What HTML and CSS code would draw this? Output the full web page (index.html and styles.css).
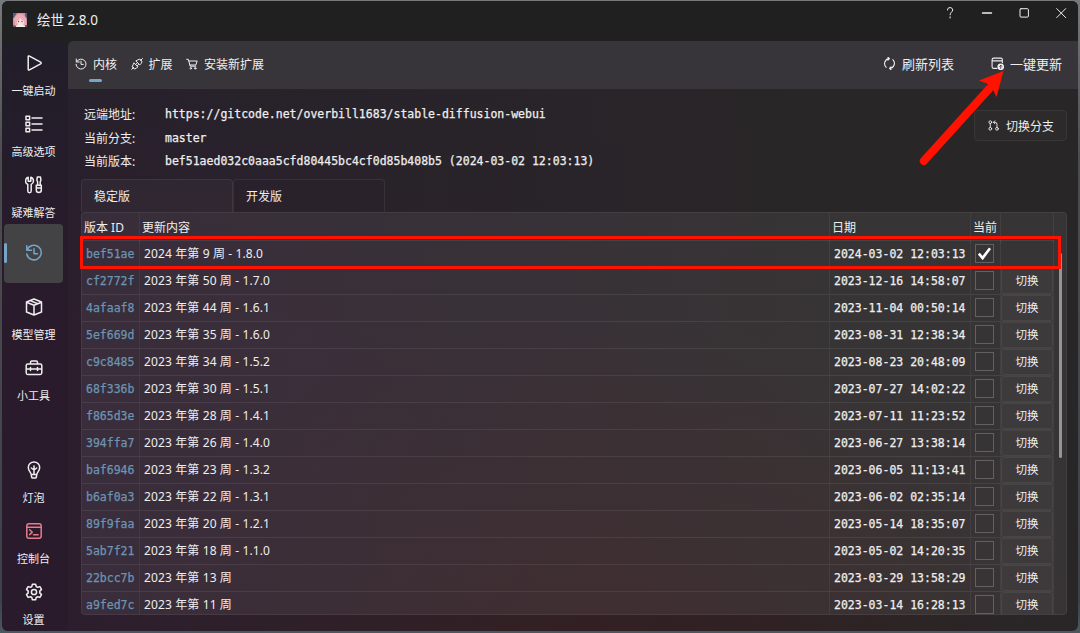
FILE: index.html
```html
<!DOCTYPE html>
<html lang="zh-CN">

<head>
  <meta charset="UTF-8">
  <meta name="viewport" content="width=device-width, initial-scale=1.0">
  <title>绘世 2.8.0</title>
  <link rel="stylesheet" href="styles.css">
</head>

<body>
  <div class="window">
    <header class="titlebar">
      <svg class="logo" viewBox="0 0 14 14">
        <rect width="14" height="14" rx="2" fill="#d88f9e" />
        <path d="M0 2 0 0H4L2 3 1 5H0zM12 0h2v6l-2-3z" fill="#46658c" />
        <path d="M1 6Q3 1 7 1t6 5v6H2z" fill="#efa9b2" />
        <path d="M4 8l2-1 1-2 2 2 2 1v2l-2 2H6l-2-2z" fill="#f7ded8" />
        <circle cx="5.5" cy="8.5" r=".7" fill="#7b4355" />
        <circle cx="9" cy="8.5" r=".7" fill="#7b4355" />
        <path d="M3 13l3-2 1 1 2-1 3 2v1H3z" fill="#f0ece8" />
        <path d="M0 12l3 1v1H0zM12 12h2v2h-2z" fill="#6f536d" />
      </svg>
      <span class="title">绘世 2.8.0</span>
      <div class="win-btns">
        <svg class="help" viewBox="0 0 12 12"><path d="M3.5 3C3.5 1.3 4.6.6 6 .6S8.7 1.5 8.7 3C8.7 5 6.1 5.1 6.1 7.8M6.1 9.8v1.2" /></svg>
        <svg viewBox="0 0 12 12"><path d="M1.5 6h9" stroke-width="1.4" /></svg>
        <svg viewBox="0 0 12 12"><rect x="2" y="1.7" width="8.4" height="8.4" rx="1" /></svg>
        <svg viewBox="0 0 12 12"><path d="M1.7 1.6l9 9M10.7 1.6l-9 9" /></svg>
      </div>
    </header>

    <div class="body">
      <nav class="sidebar">
        <a class="nav-item">
          <svg viewBox="0 0 18 18"><path d="M3.2 2.9v12.2q0 1.4 1.3.8L15.6 9.8q1.2-.8 0-1.6L4.5 2.1q-1.3-.6-1.3.8z" /></svg>
          <span>一键启动</span>
        </a>
        <a class="nav-item">
          <svg viewBox="0 0 18 18"><path d="M1 1.2h3.6v3.6H1zM1 7.2h3.6v3.6H1zM1 13.2h3.6v3.6H1zM7 3h10M7 9h10M7 15h10" /></svg>
          <span>高级选项</span>
        </a>
        <a class="nav-item">
          <svg viewBox="0 0 18 18"><path d="M3.2 1.3v4h2.6v-4a3.8 3.8 0 0 1 .4 7.1V15a1.7 1.7 0 0 1-3.4 0V8.4A3.8 3.8 0 0 1 3.2 1.3zM12.3 1h3.2l.4 3.2-.7 1.6v3.4h-2.6V5.8l-.7-1.6zM11.3 9.2h5V14a2.5 2.5 0 0 1-5 0zM11.3 12h5" /></svg>
          <span>疑难解答</span>
        </a>
        <a class="nav-item active">
          <svg viewBox="0 0 18 18"><path d="M1.8 1.7v4.6h4.6M2.1 6A7.3 7.3 0 1 1 1.8 10M9 4.8v4.9h3.5" /></svg>
        </a>
        <a class="nav-item">
          <svg viewBox="0 0 18 18"><path d="M9 1l7.5 3v10L9 17l-7.5-3V4zM1.5 4.3L9 7.3l7.5-3M9 7.3V17M5.3 2.6l7.4 3.1" /></svg>
          <span>模型管理</span>
        </a>
        <a class="nav-item">
          <svg viewBox="0 0 18 18"><path d="M5.5 5V3.5q0-1.4 1.4-1.4h4.2q1.4 0 1.4 1.4V5M2.8 5h12.4q1.6 0 1.6 1.6v7.2q0 1.6-1.6 1.6H2.8q-1.6 0-1.6-1.6V6.6Q1.2 5 2.8 5zM1.2 10h15.6M5.5 8.4v3.2M12.5 8.4v3.2" /></svg>
          <span>小工具</span>
        </a>
        <div class="spacer"></div>
        <a class="nav-item">
          <svg viewBox="0 0 18 18"><path d="M6.2 13.3C6 11.5 3.3 10 3.3 6.6A5.7 5.7 0 0 1 14.7 6.6c0 3.4-2.7 4.9-2.9 6.7l-.4 2.7q-.2 1-1.2 1H7.8q-1 0-1.2-1zM6.2 13.5h5.6M9 13V5M6.3 7l2.7 2 2.7-2" /></svg>
          <span>灯泡</span>
        </a>
        <a class="nav-item console">
          <svg viewBox="0 0 18 18"><path d="M4 1.8h10q2.2 0 2.2 2.2v10q0 2.2-2.2 2.2H4q-2.2 0-2.2-2.2V4Q1.8 1.8 4 1.8zM1.8 5.2h14.4M4.7 7.8l2.6 2.4-2.6 2.4M8.5 12.8h4.6" /></svg>
          <span>控制台</span>
        </a>
        <a class="nav-item">
          <svg viewBox="0 0 18 18"><path d="M7.4 1.2h3.2l.6 2.3 1.4.8 2.3-.7 1.6 2.8-1.7 1.7v1.8l1.7 1.7-1.6 2.8-2.3-.7-1.4.8-.6 2.3H7.4l-.6-2.3-1.4-.8-2.3.7-1.6-2.8 1.7-1.7V8.1L1.5 6.4l1.6-2.8 2.3.7 1.4-.8z" /><circle cx="9" cy="9" r="2.6" /></svg>
          <span>设置</span>
        </a>
      </nav>

      <main class="content">
        <div class="toolbar">
          <a class="tool current">
            <svg viewBox="0 0 12 12"><path d="M1.3 1v3h3M1.6 3.7A5 5 0 1 1 1 6.2M6 3.2v3.2h2.3" /></svg>
            <span>内核</span>
          </a>
          <a class="tool">
            <svg viewBox="0 0 12 12"><path d="M.7 11.3l2-2M3.2 5.1l3.7 3.7-1.3 1.3a2.4 2.4 0 0 1-3.5-3.6zM5.1 3.2l3.7 3.7 1.3-1.3A2.5 2.5 0 0 0 6.5 2zM9.5 2.5l2-2M4.6 6.5l1.5-1.5M6 7.9l1.5-1.5" /></svg>
            <span>扩展</span>
          </a>
          <a class="tool">
            <svg viewBox="0 0 12 12"><path d="M.7 1.3h1.6l1.9 6.9h5.6M2.8 3h8.4L9.8 7H4" /><circle cx="4.8" cy="10.3" r=".8" /><circle cx="9.2" cy="10.3" r=".8" /></svg>
            <span>安装新扩展</span>
          </a>
          <a class="tool big refresh">
            <svg viewBox="0 0 12 12"><path d="M5.8 1.5A4.6 4.6 0 0 0 3 9.5M6.2 10.5A4.6 4.6 0 0 0 9 2.5M4.5 .2l1.5 1.3-1.5 1.4M7.5 9.1L6 10.5l1.5 1.3" /></svg>
            <span>刷新列表</span>
          </a>
          <a class="tool big">
            <svg viewBox="0 0 12 12"><path d="M5.5 10.5H2.6Q1 10.5 1 8.9V2.7Q1 1 2.6 1h6.3q1.6 0 1.6 1.6v2.6M1 3.6h9.5" /><circle cx="9" cy="9" r="3.1" fill="#eee" stroke="none" /><path d="M9 10.6V7.8M8 8.6l1-1 1 1" stroke="#38353a" stroke-width=".8" /></svg>
            <span>一键更新</span>
          </a>
        </div>

        <div class="info">
          <dl>
            <dt>远端地址:</dt>
            <dd>https://gitcode.net/overbill1683/stable-diffusion-webui</dd>
            <dt>当前分支:</dt>
            <dd>master</dd>
            <dt>当前版本:</dt>
            <dd>bef51aed032c0aaa5cfd80445bc4cf0d85b408b5 (2024-03-02 12:03:13)</dd>
          </dl>
          <button class="branch-btn">
            <svg viewBox="0 0 12 12"><circle cx="2.5" cy="2.4" r="1.5" /><circle cx="2.5" cy="9.6" r="1.5" /><circle cx="9.8" cy="9.6" r="1.5" /><path d="M2.5 3.9v4.2M9.8 8.1V4.5q0-2-2-2H6M7.5 .9L6 2.5l1.5 1.6" /></svg>
            <span>切换分支</span>
          </button>
        </div>

        <div class="tabs">
          <div class="tab selected">稳定版</div>
          <div class="tab">开发版</div>
        </div>

        <div class="table">
          <div class="row head">
            <div>版本 ID</div>
            <div>更新内容</div>
            <div>日期</div>
            <div>当前</div>
            <div></div>
          </div>
          <div id="rows"></div>
          <div class="scrollbar"></div>
        </div>
      </main>
    </div>
  </div>

  <div class="mark-box"></div>
  <svg class="mark-arrow" viewBox="0 0 90 100">
    <path d="M8.8 91L74 19" stroke="#ff1200" stroke-width="8" stroke-linecap="round" />
    <path d="M88.5 1L81.5 27 77.5 19 72 13.5 64 10.5z" fill="#ff1200" stroke="none" />
  </svg>

  <script>
    const versions = [
      ['bef51ae', '2024 年第 9 周 - 1.8.0', '2024-03-02 12:03:13'],
      ['cf2772f', '2023 年第 50 周 - 1.7.0', '2023-12-16 14:58:07'],
      ['4afaaf8', '2023 年第 44 周 - 1.6.1', '2023-11-04 00:50:14'],
      ['5ef669d', '2023 年第 35 周 - 1.6.0', '2023-08-31 12:38:34'],
      ['c9c8485', '2023 年第 34 周 - 1.5.2', '2023-08-23 20:48:09'],
      ['68f336b', '2023 年第 30 周 - 1.5.1', '2023-07-27 14:02:22'],
      ['f865d3e', '2023 年第 28 周 - 1.4.1', '2023-07-11 11:23:52'],
      ['394ffa7', '2023 年第 26 周 - 1.4.0', '2023-06-27 13:38:14'],
      ['baf6946', '2023 年第 23 周 - 1.3.2', '2023-06-05 11:13:41'],
      ['b6af0a3', '2023 年第 22 周 - 1.3.1', '2023-06-02 02:35:14'],
      ['89f9faa', '2023 年第 20 周 - 1.2.1', '2023-05-14 18:35:07'],
      ['5ab7f21', '2023 年第 18 周 - 1.1.0', '2023-05-02 14:20:35'],
      ['22bcc7b', '2023 年第 13 周', '2023-03-29 13:58:29'],
      ['a9fed7c', '2023 年第 11 周', '2023-03-14 16:28:13']
    ]
    const tick = '<svg viewBox="0 0 18 18"><path d="M3 9.2l4 4.6L14.8 3.5" /></svg>'

    // 第一条为当前版本
    document.querySelector('#rows').innerHTML = versions.map((v, i) => `
      <div class="row">
        <div class="hash">${v[0]}</div>
        <div class="desc">${v[1]}</div>
        <div class="date">${v[2]}</div>
        <div class="now"><span class="check">${i === 0 ? tick : ''}</span></div>
        <div class="op">${i === 0 ? '' : '<button>切换</button>'}</div>
      </div>`).join('')
  </script>
</body>

</html>
```
FILE: styles.css
```css
* {
  margin: 0;
  padding: 0;
  box-sizing: border-box;
}

body {
  width: 1080px;
  height: 633px;
  padding: 1px 2px 2px;
  overflow: hidden;
  background: linear-gradient(#77797a, #4c4c50 25%, #3d4248 95%, #4b5960);
  color: #eee;
  font-family: "Noto Sans", "Noto Sans CJK SC", sans-serif;
  font-size: 12px;
}

svg {
  fill: none;
  stroke: currentColor;
  stroke-linecap: round;
  stroke-linejoin: round;
}

button {
  font: inherit;
  color: inherit;
}

.window {
  display: flex;
  flex-direction: column;
  height: 630px;
  border-radius: 6px;
  overflow: hidden;
  background:
    radial-gradient(ellipse 480px 340px at 600px 650px, rgba(54, 30, 33, 0.75), transparent),
    linear-gradient(90deg, transparent, #292627 75%),
    linear-gradient(#25212c, #2d1d2e 55%, #2d1d2e);
}

.titlebar {
  display: flex;
  align-items: center;
  flex: none;
  height: 40px;
  padding: 0 0 2px 11px;
  background: #202020;
}

.logo {
  width: 14px;
  height: 14px;
  stroke: none;
}

.title {
  margin-left: 10px;
  font-size: 13.5px;
  line-height: 20px;
}

.win-btns {
  display: flex;
  align-self: flex-start;
  gap: 25px;
  margin: 6px 11px 0 auto;
}

.win-btns svg {
  width: 12px;
  height: 12px;
}

.body {
  display: flex;
  flex: 1;
  min-height: 0;
}

.sidebar {
  display: flex;
  flex-direction: column;
  flex: none;
  width: 66px;
  background: linear-gradient(#211e29, #291b2c 40%, #291b2c);
}

.nav-item {
  position: relative;
  display: flex;
  flex-direction: column;
  align-items: center;
  flex: none;
  width: 63px;
  height: 61px;
  padding-top: 13px;
  font-size: 11px;
}

.nav-item svg {
  width: 18px;
  height: 18px;
  stroke-width: 1.5;
}

.nav-item span {
  margin-top: 11px;
  line-height: 16px;
}

.nav-item.active {
  width: 59px;
  height: 59px;
  margin: 0 0 2px 2px;
  padding-top: 20px;
  border-radius: 4px;
  background: #434244;
  color: #76a5c8;
}

.nav-item.active::before {
  content: "";
  position: absolute;
  left: 0;
  top: 19px;
  width: 3px;
  height: 20px;
  border-radius: 2px;
  background: #76a5c8;
}

.console svg {
  color: #e67c8c;
}

.spacer {
  flex: 1;
}

.content {
  flex: 1;
  min-width: 0;
  border-radius: 6px 0 0 0;
  overflow: hidden;
}

.toolbar {
  display: flex;
  height: 48px;
  padding: 0 16px 2px 7px;
  background: #37353a;
}

.tool {
  position: relative;
  display: flex;
  align-items: center;
  margin-right: 13.5px;
}

.tool svg {
  width: 12px;
  height: 12px;
  margin-right: 6px;
}

.tool.current::after {
  content: "";
  position: absolute;
  left: 14px;
  bottom: 5px;
  width: 13px;
  height: 3px;
  border-radius: 2px;
  background: #76a5c8;
}

.tool.big {
  font-size: 13px;
  margin-right: 0;
  padding-bottom: 1px;
}

.tool.big svg {
  width: 13px;
  height: 13px;
  margin-right: 6px;
}

.tool.refresh {
  margin-left: auto;
  margin-right: 37px;
}

.info {
  display: flex;
  justify-content: space-between;
  height: 90px;
  padding: 14px 11px 0 16px;
}

dl {
  display: grid;
  grid-template-columns: 81px auto;
  grid-auto-rows: 23.5px;
  line-height: 23px;
}

dd,
.hash,
.date {
  font-family: "DejaVu Sans Mono", "Liberation Mono", monospace;
  font-size: 11.5px;
  -webkit-text-stroke: 0.25px;
}

.branch-btn {
  display: flex;
  align-items: center;
  width: 93px;
  height: 31px;
  margin-top: 7px;
  padding-left: 13px;
  border: 1px solid #393638;
  border-radius: 4px;
  background: #2d2a2c;
}

.branch-btn svg {
  width: 11px;
  height: 11px;
  margin-right: 7px;
}

.tabs {
  display: flex;
  padding-left: 13px;
}

.tab {
  width: 152px;
  height: 33px;
  padding-left: 12px;
  border: 1px solid rgba(255, 255, 255, 0.07);
  border-bottom: none;
  border-radius: 4px 4px 0 0;
  line-height: 34px;
}

.tab.selected {
  background: rgba(255, 255, 255, 0.03);
}

.table {
  position: relative;
  width: 986px;
  height: 403px;
  margin-left: 13px;
  border: 1px solid rgba(255, 255, 255, 0.06);
  border-radius: 4px;
  background: rgba(255, 255, 255, 0.065);
  overflow: hidden;
}

.row {
  display: grid;
  grid-template-columns: 58px 690px 141px 30px 53px;
  height: 27px;
  width: 972px;
  border-bottom: 1px solid rgba(255, 255, 255, 0.08);
  line-height: 26px;
}

.row > div {
  border-right: 1px solid rgba(255, 255, 255, 0.055);
  padding-left: 4px;
  white-space: nowrap;
}

.row.head {
  height: 28px;
  line-height: 30px;
}

.row.head > div {
  padding-left: 2px;
}

.row .hash {
  color: #6c94b3;
}

.row .desc {
  letter-spacing: 0.12px;
}

.row .now {
  padding: 3px 0 0 4px;
}

.check {
  display: block;
  width: 19px;
  height: 19px;
  border: 1px solid #626061;
}

.check svg {
  display: block;
  width: 17px;
  height: 17px;
  color: #fff;
  stroke-width: 2.8;
  stroke-linecap: butt;
  stroke-linejoin: miter;
}

.row .op {
  padding: 0;
}

.op button {
  display: block;
  width: 52px;
  height: 26px;
  border: 1px solid rgba(255, 255, 255, 0.06);
  border-radius: 3px;
  background: rgba(255, 255, 255, 0.03);
  font-size: 11.5px;
  line-height: 24px;
}

.scrollbar {
  position: absolute;
  right: 4px;
  top: 40px;
  width: 3px;
  height: 205px;
  border-radius: 2px;
  background: #969494;
}

/* 教程标注 */
.mark-box {
  position: absolute;
  left: 80px;
  top: 236px;
  width: 981px;
  height: 33px;
  border: 3px solid #ff1200;
}

.mark-arrow {
  position: absolute;
  left: 915px;
  top: 70px;
  width: 90px;
  height: 100px;
}
```
